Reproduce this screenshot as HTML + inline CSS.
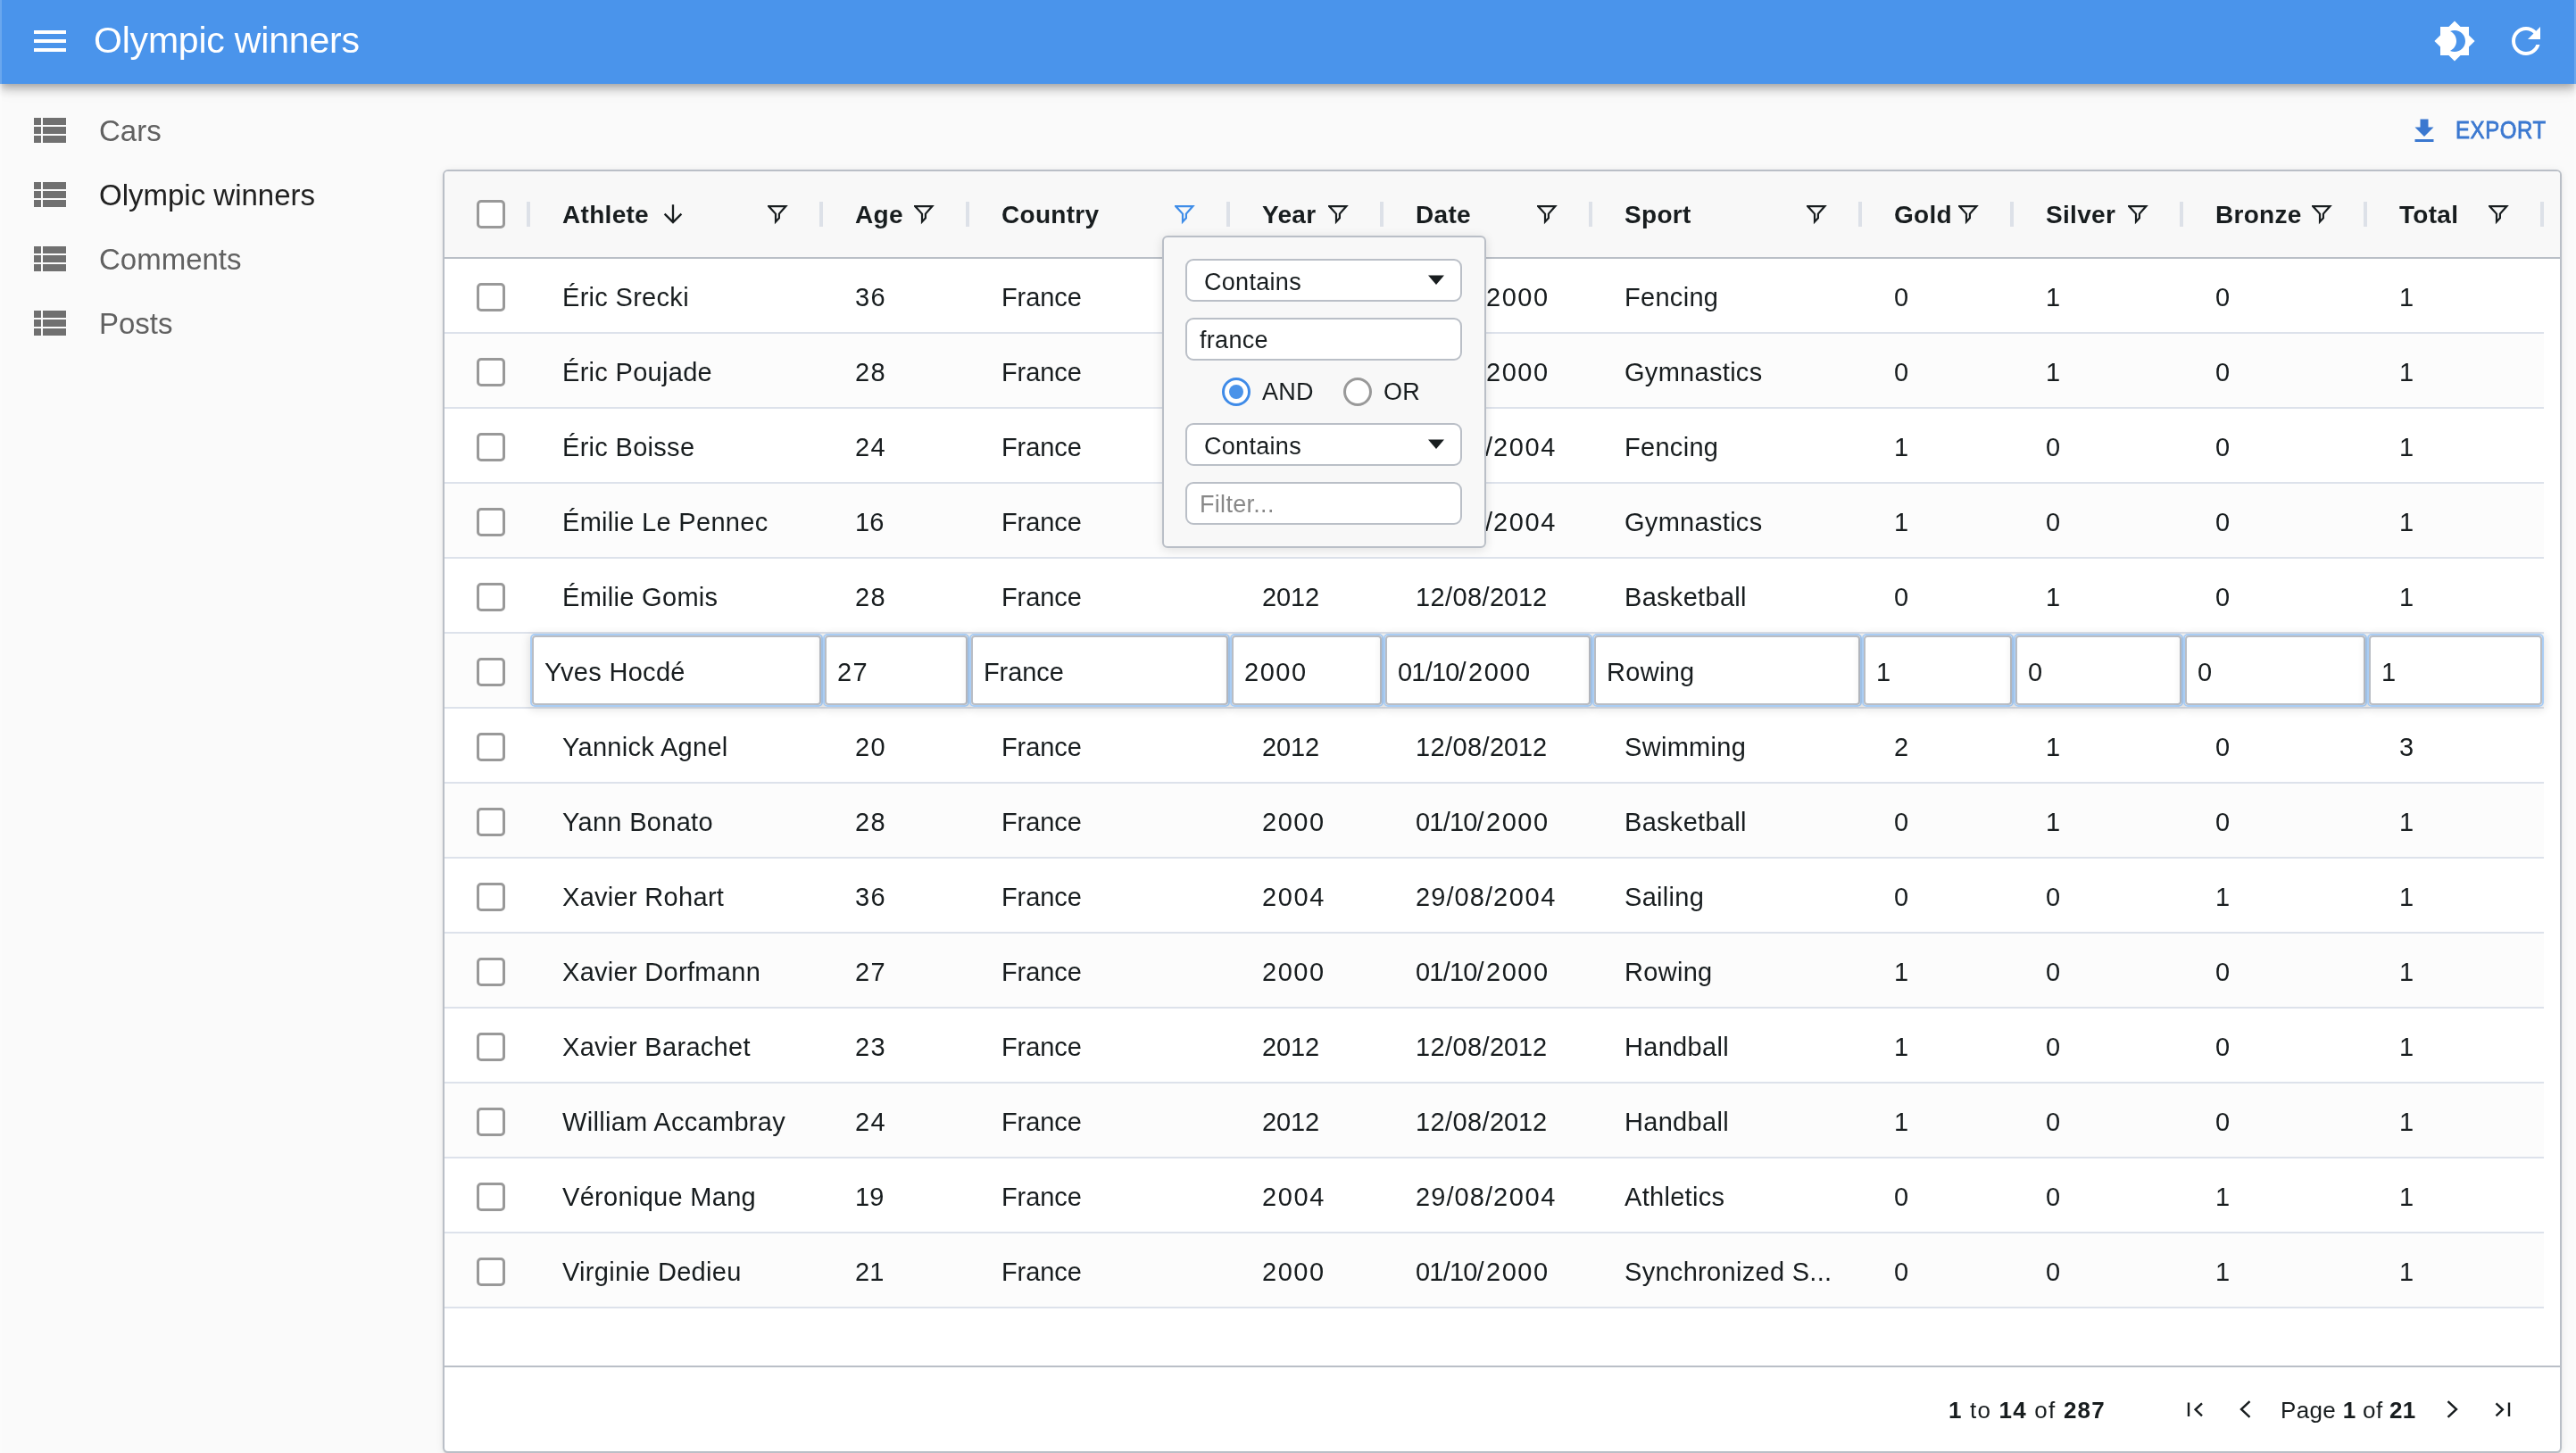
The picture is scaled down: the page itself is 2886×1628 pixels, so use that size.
<!DOCTYPE html>
<html><head><meta charset="utf-8"><style>
html,body{margin:0;padding:0;}
body{will-change:transform;width:2886px;height:1628px;overflow:hidden;background:#fafafa;position:relative;font-family:'Liberation Sans', sans-serif;}
.t{position:absolute;white-space:nowrap;}
.ic{position:absolute;display:block;}
#appbar{position:absolute;left:0;top:0;width:2886px;height:94px;background:#4a94eb;z-index:2;
  box-shadow:0 4px 8px -2px rgba(0,0,0,.2),0 8px 10px 0 rgba(0,0,0,.14),0 2px 20px 0 rgba(0,0,0,.12);}
.layer{position:absolute;left:0;top:0;width:0;height:0}
#edge{position:absolute;left:0;top:0;width:2px;height:1628px;background:rgba(255,255,255,0.18);z-index:10}
#edge2{position:absolute;left:2884px;top:0;width:2px;height:1628px;background:rgba(255,255,255,0.18);z-index:10}
#card{position:absolute;left:496px;top:190px;width:2370px;height:1434px;border:2px solid #babfc7;border-radius:6px;background:#fff;box-shadow:0 2px 2px -1px rgba(0,0,0,.12),0 1px 2px 0 rgba(0,0,0,.08),0 1px 8px 0 rgba(0,0,0,.08);}
#header{position:absolute;left:498px;top:192px;width:2370px;height:96px;background:#f8f8f8;border-bottom:2px solid #babfc7;border-radius:4px 4px 0 0}
.sep{position:absolute;top:226px;width:4px;height:28px;background:#dde1e8}
.cb{position:absolute;width:26px;height:26px;border:3px solid #999;border-radius:5px;background:#fff;z-index:1}
.row{position:absolute;left:498px;width:2352px;height:82px;border-bottom:2px solid #dde2eb}
.ed{position:absolute;height:82px;border:2px solid #aacdf4;border-radius:5px;box-sizing:border-box;
   box-shadow:0 2px 10px 2px rgba(0,0,0,0.10);z-index:1}
.edi{position:absolute;left:0;top:0;right:0;bottom:0;border:2px solid #b9bdc4;border-radius:4px;background:#fff}
#pager{position:absolute;left:498px;top:1530px;width:2370px;height:2px;background:#babfc7}
#popup{position:absolute;left:1302px;top:264px;width:359px;height:346px;background:#f8f8f8;border:2px solid #babfc7;border-radius:6px;
   box-shadow:0 2px 12px 0 rgba(0,0,0,0.12)}

.inp{position:absolute;left:1328px;width:310px;background:#fff;border:2px solid #babfc7;border-radius:9px;box-sizing:border-box}
.radio{position:absolute;width:26px;height:26px;border:3px solid #999;border-radius:50%;background:#fff}
.radio.on{border-color:#3f8be8;}
.radio.on::after{content:'';position:absolute;left:5px;top:5px;width:16px;height:16px;border-radius:50%;background:#4a93e9}
</style></head>
<body>
<div id="appbar"></div><div class="layer" style="z-index:3">
<div id="edge"></div><div id="edge2"></div>
<svg class="ic" style="left:32px;top:22px" width="48" height="48" viewBox="0 0 24 24"><path fill="#fff" d="M3 18h18v-2H3v2zm0-5h18v-2H3v2zm0-7v2h18V6H3z"/></svg>
<div class="t" style="left:105px;top:25px;font-size:41px;line-height:41px;color:#fff;font-weight:normal;letter-spacing:-0.2px">Olympic winners</div>
<svg class="ic" style="left:2726px;top:22px" width="48" height="48" viewBox="0 0 24 24"><path fill="#fff" d="M20 8.69V4h-4.69L12 .69 8.69 4H4v4.69L.69 12 4 15.31V20h4.69L12 23.31 15.31 20H20v-4.69L23.31 12 20 8.69zM12 18c-.89 0-1.74-.2-2.5-.55C11.56 16.5 13 14.42 13 12s-1.44-4.5-3.5-5.45C10.26 6.2 11.11 6 12 6c3.31 0 6 2.69 6 6s-2.69 6-6 6z"/></svg>
<svg class="ic" style="left:2806px;top:22px" width="48" height="48" viewBox="0 0 24 24"><path fill="#fff" d="M17.65 6.35C16.2 4.9 14.21 4 12 4c-4.42 0-7.99 3.58-7.99 8s3.57 8 7.99 8c3.73 0 6.84-2.55 7.73-6h-2.08c-.82 2.33-3.04 4-5.65 4-3.31 0-6-2.69-6-6s2.69-6 6-6c1.66 0 3.14.69 4.22 1.78L13 11h7V4l-2.35 2.35z"/></svg>
</div>
<svg class="ic" style="left:32px;top:122px" width="48" height="48" viewBox="0 0 24 24"><path fill="#707070" d="M3 14h4v-4H3v4zm0 5h4v-4H3v4zM3 9h4V5H3v4zm5 5h13v-4H8v4zm0 5h13v-4H8v4zM8 5v4h13V5H8z"/></svg>
<div class="t" style="left:111px;top:130px;font-size:33px;line-height:33px;color:#616161;font-weight:normal;">Cars</div>
<svg class="ic" style="left:32px;top:194px" width="48" height="48" viewBox="0 0 24 24"><path fill="#707070" d="M3 14h4v-4H3v4zm0 5h4v-4H3v4zM3 9h4V5H3v4zm5 5h13v-4H8v4zm0 5h13v-4H8v4zM8 5v4h13V5H8z"/></svg>
<div class="t" style="left:111px;top:202px;font-size:33px;line-height:33px;color:#212121;font-weight:normal;">Olympic winners</div>
<svg class="ic" style="left:32px;top:266px" width="48" height="48" viewBox="0 0 24 24"><path fill="#707070" d="M3 14h4v-4H3v4zm0 5h4v-4H3v4zM3 9h4V5H3v4zm5 5h13v-4H8v4zm0 5h13v-4H8v4zM8 5v4h13V5H8z"/></svg>
<div class="t" style="left:111px;top:274px;font-size:33px;line-height:33px;color:#616161;font-weight:normal;">Comments</div>
<svg class="ic" style="left:32px;top:338px" width="48" height="48" viewBox="0 0 24 24"><path fill="#707070" d="M3 14h4v-4H3v4zm0 5h4v-4H3v4zM3 9h4V5H3v4zm5 5h13v-4H8v4zm0 5h13v-4H8v4zM8 5v4h13V5H8z"/></svg>
<div class="t" style="left:111px;top:346px;font-size:33px;line-height:33px;color:#616161;font-weight:normal;">Posts</div>
<svg class="ic" style="left:2698px;top:129px" width="36" height="36" viewBox="0 0 24 24"><path fill="#3b78d0" d="M19 9h-4V3H9v6H5l7 7 7-7zM5 18v2h14v-2H5z"/></svg>
<div class="t" style="left:2751px;top:132px;font-size:27.5px;line-height:27.5px;color:#3b78d0;font-weight:normal;letter-spacing:0.6px;-webkit-text-stroke:0.8px #3b78d0;transform:scaleX(0.875);transform-origin:0 0;">EXPORT</div>
<div id="card"></div>
<div id="header"></div>
<div class="cb" style="left:534px;top:224px"></div>
<div class="sep" style="left:590px"></div>
<div class="sep" style="left:918px"></div>
<div class="sep" style="left:1082px"></div>
<div class="sep" style="left:1374px"></div>
<div class="sep" style="left:1546px"></div>
<div class="sep" style="left:1780px"></div>
<div class="sep" style="left:2082px"></div>
<div class="sep" style="left:2252px"></div>
<div class="sep" style="left:2442px"></div>
<div class="sep" style="left:2648px"></div>
<div class="sep" style="left:2846px"></div>
<div class="t" style="left:630px;top:227px;font-size:28px;line-height:28px;color:#181d1f;font-weight:bold;letter-spacing:0.3px">Athlete</div>
<svg class="ic" style="left:860px;top:229px" width="23" height="23" viewBox="0 0 23 23"><path fill="none" stroke="#181d1f" stroke-width="2.2" stroke-linejoin="miter" d="M1.2 2.1 H20.4 L12.9 10.6 V15.2 L9.0 19.4 V10.6 Z"/></svg>
<div class="t" style="left:958px;top:227px;font-size:28px;line-height:28px;color:#181d1f;font-weight:bold;letter-spacing:0.3px">Age</div>
<svg class="ic" style="left:1024px;top:229px" width="23" height="23" viewBox="0 0 23 23"><path fill="none" stroke="#181d1f" stroke-width="2.2" stroke-linejoin="miter" d="M1.2 2.1 H20.4 L12.9 10.6 V15.2 L9.0 19.4 V10.6 Z"/></svg>
<div class="t" style="left:1122px;top:227px;font-size:28px;line-height:28px;color:#181d1f;font-weight:bold;letter-spacing:0.3px">Country</div>
<svg class="ic" style="left:1316px;top:229px" width="23" height="23" viewBox="0 0 23 23"><path fill="none" stroke="#3f8de8" stroke-width="2.2" stroke-linejoin="miter" d="M1.2 2.1 H20.4 L12.9 10.6 V15.2 L9.0 19.4 V10.6 Z"/></svg>
<div class="t" style="left:1414px;top:227px;font-size:28px;line-height:28px;color:#181d1f;font-weight:bold;letter-spacing:0.3px">Year</div>
<svg class="ic" style="left:1488px;top:229px" width="23" height="23" viewBox="0 0 23 23"><path fill="none" stroke="#181d1f" stroke-width="2.2" stroke-linejoin="miter" d="M1.2 2.1 H20.4 L12.9 10.6 V15.2 L9.0 19.4 V10.6 Z"/></svg>
<div class="t" style="left:1586px;top:227px;font-size:28px;line-height:28px;color:#181d1f;font-weight:bold;letter-spacing:0.3px">Date</div>
<svg class="ic" style="left:1722px;top:229px" width="23" height="23" viewBox="0 0 23 23"><path fill="none" stroke="#181d1f" stroke-width="2.2" stroke-linejoin="miter" d="M1.2 2.1 H20.4 L12.9 10.6 V15.2 L9.0 19.4 V10.6 Z"/></svg>
<div class="t" style="left:1820px;top:227px;font-size:28px;line-height:28px;color:#181d1f;font-weight:bold;letter-spacing:0.3px">Sport</div>
<svg class="ic" style="left:2024px;top:229px" width="23" height="23" viewBox="0 0 23 23"><path fill="none" stroke="#181d1f" stroke-width="2.2" stroke-linejoin="miter" d="M1.2 2.1 H20.4 L12.9 10.6 V15.2 L9.0 19.4 V10.6 Z"/></svg>
<div class="t" style="left:2122px;top:227px;font-size:28px;line-height:28px;color:#181d1f;font-weight:bold;letter-spacing:0.3px">Gold</div>
<svg class="ic" style="left:2194px;top:229px" width="23" height="23" viewBox="0 0 23 23"><path fill="none" stroke="#181d1f" stroke-width="2.2" stroke-linejoin="miter" d="M1.2 2.1 H20.4 L12.9 10.6 V15.2 L9.0 19.4 V10.6 Z"/></svg>
<div class="t" style="left:2292px;top:227px;font-size:28px;line-height:28px;color:#181d1f;font-weight:bold;letter-spacing:0.3px">Silver</div>
<svg class="ic" style="left:2384px;top:229px" width="23" height="23" viewBox="0 0 23 23"><path fill="none" stroke="#181d1f" stroke-width="2.2" stroke-linejoin="miter" d="M1.2 2.1 H20.4 L12.9 10.6 V15.2 L9.0 19.4 V10.6 Z"/></svg>
<div class="t" style="left:2482px;top:227px;font-size:28px;line-height:28px;color:#181d1f;font-weight:bold;letter-spacing:0.3px">Bronze</div>
<svg class="ic" style="left:2590px;top:229px" width="23" height="23" viewBox="0 0 23 23"><path fill="none" stroke="#181d1f" stroke-width="2.2" stroke-linejoin="miter" d="M1.2 2.1 H20.4 L12.9 10.6 V15.2 L9.0 19.4 V10.6 Z"/></svg>
<div class="t" style="left:2688px;top:227px;font-size:28px;line-height:28px;color:#181d1f;font-weight:bold;letter-spacing:0.3px">Total</div>
<svg class="ic" style="left:2788px;top:229px" width="23" height="23" viewBox="0 0 23 23"><path fill="none" stroke="#181d1f" stroke-width="2.2" stroke-linejoin="miter" d="M1.2 2.1 H20.4 L12.9 10.6 V15.2 L9.0 19.4 V10.6 Z"/></svg>
<svg class="ic" style="left:742px;top:228px" width="24" height="24" viewBox="0 0 24 24"><path fill="none" stroke="#181d1f" stroke-width="2.3" d="M12 1.2V21M2.6 11.6L12 21l9.4-9.4"/></svg>
<div class="row" style="top:290px;background:#fff"></div>
<div class="cb" style="left:534px;top:317px"></div>
<div class="t" style="left:630px;top:319px;font-size:29px;line-height:29px;color:#181d1f;font-weight:normal;letter-spacing:0.3px;">Éric Srecki</div>
<div class="t" style="left:958px;top:319px;font-size:29px;line-height:29px;color:#181d1f;font-weight:normal;letter-spacing:1.4px;">36</div>
<div class="t" style="left:1122px;top:319px;font-size:29px;line-height:29px;color:#181d1f;font-weight:normal;letter-spacing:-0.1px;">France</div>
<div class="t" style="left:1414px;top:319px;font-size:29px;line-height:29px;color:#181d1f;font-weight:normal;letter-spacing:1.5px;">2000</div>
<div class="t" style="left:1586px;top:319px;font-size:29px;line-height:29px;color:#181d1f;font-weight:normal;letter-spacing:-0.8px;">01/10/</div><div class="t" style="left:1665px;top:319px;font-size:29px;line-height:29px;color:#181d1f;font-weight:normal;letter-spacing:1.5px;">2000</div>
<div class="t" style="left:1820px;top:319px;font-size:29px;line-height:29px;color:#181d1f;font-weight:normal;letter-spacing:0.3px;">Fencing</div>
<div class="t" style="left:2122px;top:319px;font-size:29px;line-height:29px;color:#181d1f;font-weight:normal;letter-spacing:0.3px;">0</div>
<div class="t" style="left:2292px;top:319px;font-size:29px;line-height:29px;color:#181d1f;font-weight:normal;letter-spacing:0.3px;">1</div>
<div class="t" style="left:2482px;top:319px;font-size:29px;line-height:29px;color:#181d1f;font-weight:normal;letter-spacing:0.3px;">0</div>
<div class="t" style="left:2688px;top:319px;font-size:29px;line-height:29px;color:#181d1f;font-weight:normal;letter-spacing:0.3px;">1</div>
<div class="row" style="top:374px;background:#fcfcfc"></div>
<div class="cb" style="left:534px;top:401px"></div>
<div class="t" style="left:630px;top:403px;font-size:29px;line-height:29px;color:#181d1f;font-weight:normal;letter-spacing:0.3px;">Éric Poujade</div>
<div class="t" style="left:958px;top:403px;font-size:29px;line-height:29px;color:#181d1f;font-weight:normal;letter-spacing:1.4px;">28</div>
<div class="t" style="left:1122px;top:403px;font-size:29px;line-height:29px;color:#181d1f;font-weight:normal;letter-spacing:-0.1px;">France</div>
<div class="t" style="left:1414px;top:403px;font-size:29px;line-height:29px;color:#181d1f;font-weight:normal;letter-spacing:1.5px;">2000</div>
<div class="t" style="left:1586px;top:403px;font-size:29px;line-height:29px;color:#181d1f;font-weight:normal;letter-spacing:-0.8px;">01/10/</div><div class="t" style="left:1665px;top:403px;font-size:29px;line-height:29px;color:#181d1f;font-weight:normal;letter-spacing:1.5px;">2000</div>
<div class="t" style="left:1820px;top:403px;font-size:29px;line-height:29px;color:#181d1f;font-weight:normal;letter-spacing:0.3px;">Gymnastics</div>
<div class="t" style="left:2122px;top:403px;font-size:29px;line-height:29px;color:#181d1f;font-weight:normal;letter-spacing:0.3px;">0</div>
<div class="t" style="left:2292px;top:403px;font-size:29px;line-height:29px;color:#181d1f;font-weight:normal;letter-spacing:0.3px;">1</div>
<div class="t" style="left:2482px;top:403px;font-size:29px;line-height:29px;color:#181d1f;font-weight:normal;letter-spacing:0.3px;">0</div>
<div class="t" style="left:2688px;top:403px;font-size:29px;line-height:29px;color:#181d1f;font-weight:normal;letter-spacing:0.3px;">1</div>
<div class="row" style="top:458px;background:#fff"></div>
<div class="cb" style="left:534px;top:485px"></div>
<div class="t" style="left:630px;top:487px;font-size:29px;line-height:29px;color:#181d1f;font-weight:normal;letter-spacing:0.3px;">Éric Boisse</div>
<div class="t" style="left:958px;top:487px;font-size:29px;line-height:29px;color:#181d1f;font-weight:normal;letter-spacing:1.4px;">24</div>
<div class="t" style="left:1122px;top:487px;font-size:29px;line-height:29px;color:#181d1f;font-weight:normal;letter-spacing:-0.1px;">France</div>
<div class="t" style="left:1414px;top:487px;font-size:29px;line-height:29px;color:#181d1f;font-weight:normal;letter-spacing:1.65px;">2004</div>
<div class="t" style="left:1586px;top:487px;font-size:29px;line-height:29px;color:#181d1f;font-weight:normal;letter-spacing:1.07px;">29/08/</div><div class="t" style="left:1673px;top:487px;font-size:29px;line-height:29px;color:#181d1f;font-weight:normal;letter-spacing:1.65px;">2004</div>
<div class="t" style="left:1820px;top:487px;font-size:29px;line-height:29px;color:#181d1f;font-weight:normal;letter-spacing:0.3px;">Fencing</div>
<div class="t" style="left:2122px;top:487px;font-size:29px;line-height:29px;color:#181d1f;font-weight:normal;letter-spacing:0.3px;">1</div>
<div class="t" style="left:2292px;top:487px;font-size:29px;line-height:29px;color:#181d1f;font-weight:normal;letter-spacing:0.3px;">0</div>
<div class="t" style="left:2482px;top:487px;font-size:29px;line-height:29px;color:#181d1f;font-weight:normal;letter-spacing:0.3px;">0</div>
<div class="t" style="left:2688px;top:487px;font-size:29px;line-height:29px;color:#181d1f;font-weight:normal;letter-spacing:0.3px;">1</div>
<div class="row" style="top:542px;background:#fcfcfc"></div>
<div class="cb" style="left:534px;top:569px"></div>
<div class="t" style="left:630px;top:571px;font-size:29px;line-height:29px;color:#181d1f;font-weight:normal;letter-spacing:0.3px;">Émilie Le Pennec</div>
<div class="t" style="left:958px;top:571px;font-size:29px;line-height:29px;color:#181d1f;font-weight:normal;letter-spacing:0.0px;">16</div>
<div class="t" style="left:1122px;top:571px;font-size:29px;line-height:29px;color:#181d1f;font-weight:normal;letter-spacing:-0.1px;">France</div>
<div class="t" style="left:1414px;top:571px;font-size:29px;line-height:29px;color:#181d1f;font-weight:normal;letter-spacing:1.65px;">2004</div>
<div class="t" style="left:1586px;top:571px;font-size:29px;line-height:29px;color:#181d1f;font-weight:normal;letter-spacing:1.07px;">29/08/</div><div class="t" style="left:1673px;top:571px;font-size:29px;line-height:29px;color:#181d1f;font-weight:normal;letter-spacing:1.65px;">2004</div>
<div class="t" style="left:1820px;top:571px;font-size:29px;line-height:29px;color:#181d1f;font-weight:normal;letter-spacing:0.3px;">Gymnastics</div>
<div class="t" style="left:2122px;top:571px;font-size:29px;line-height:29px;color:#181d1f;font-weight:normal;letter-spacing:0.3px;">1</div>
<div class="t" style="left:2292px;top:571px;font-size:29px;line-height:29px;color:#181d1f;font-weight:normal;letter-spacing:0.3px;">0</div>
<div class="t" style="left:2482px;top:571px;font-size:29px;line-height:29px;color:#181d1f;font-weight:normal;letter-spacing:0.3px;">0</div>
<div class="t" style="left:2688px;top:571px;font-size:29px;line-height:29px;color:#181d1f;font-weight:normal;letter-spacing:0.3px;">1</div>
<div class="row" style="top:626px;background:#fff"></div>
<div class="cb" style="left:534px;top:653px"></div>
<div class="t" style="left:630px;top:655px;font-size:29px;line-height:29px;color:#181d1f;font-weight:normal;letter-spacing:0.3px;">Émilie Gomis</div>
<div class="t" style="left:958px;top:655px;font-size:29px;line-height:29px;color:#181d1f;font-weight:normal;letter-spacing:1.4px;">28</div>
<div class="t" style="left:1122px;top:655px;font-size:29px;line-height:29px;color:#181d1f;font-weight:normal;letter-spacing:-0.1px;">France</div>
<div class="t" style="left:1414px;top:655px;font-size:29px;line-height:29px;color:#181d1f;font-weight:normal;letter-spacing:-0.15px;">2012</div>
<div class="t" style="left:1586px;top:655px;font-size:29px;line-height:29px;color:#181d1f;font-weight:normal;letter-spacing:0.4px;">12/08/</div><div class="t" style="left:1669px;top:655px;font-size:29px;line-height:29px;color:#181d1f;font-weight:normal;letter-spacing:-0.15px;">2012</div>
<div class="t" style="left:1820px;top:655px;font-size:29px;line-height:29px;color:#181d1f;font-weight:normal;letter-spacing:0.3px;">Basketball</div>
<div class="t" style="left:2122px;top:655px;font-size:29px;line-height:29px;color:#181d1f;font-weight:normal;letter-spacing:0.3px;">0</div>
<div class="t" style="left:2292px;top:655px;font-size:29px;line-height:29px;color:#181d1f;font-weight:normal;letter-spacing:0.3px;">1</div>
<div class="t" style="left:2482px;top:655px;font-size:29px;line-height:29px;color:#181d1f;font-weight:normal;letter-spacing:0.3px;">0</div>
<div class="t" style="left:2688px;top:655px;font-size:29px;line-height:29px;color:#181d1f;font-weight:normal;letter-spacing:0.3px;">1</div>
<div class="row" style="top:710px;background:#fcfcfc"></div>
<div class="cb" style="left:534px;top:737px"></div>
<div class="ed" style="left:594px;top:710px;width:328px"><div class="edi"></div></div>
<div class="t" style="left:610px;top:739px;font-size:29px;line-height:29px;color:#181d1f;font-weight:normal;letter-spacing:0.3px;z-index:2">Yves Hocdé</div>
<div class="ed" style="left:922px;top:710px;width:164px"><div class="edi"></div></div>
<div class="t" style="left:938px;top:739px;font-size:29px;line-height:29px;color:#181d1f;font-weight:normal;letter-spacing:1.4px;z-index:2">27</div>
<div class="ed" style="left:1086px;top:710px;width:292px"><div class="edi"></div></div>
<div class="t" style="left:1102px;top:739px;font-size:29px;line-height:29px;color:#181d1f;font-weight:normal;letter-spacing:-0.1px;z-index:2">France</div>
<div class="ed" style="left:1378px;top:710px;width:172px"><div class="edi"></div></div>
<div class="t" style="left:1394px;top:739px;font-size:29px;line-height:29px;color:#181d1f;font-weight:normal;letter-spacing:1.5px;z-index:2">2000</div>
<div class="ed" style="left:1550px;top:710px;width:234px"><div class="edi"></div></div>
<div class="t" style="left:1566px;top:739px;font-size:29px;line-height:29px;color:#181d1f;font-weight:normal;letter-spacing:-0.8px;z-index:2">01/10/</div><div class="t" style="left:1645px;top:739px;font-size:29px;line-height:29px;color:#181d1f;font-weight:normal;letter-spacing:1.5px;z-index:2">2000</div>
<div class="ed" style="left:1784px;top:710px;width:302px"><div class="edi"></div></div>
<div class="t" style="left:1800px;top:739px;font-size:29px;line-height:29px;color:#181d1f;font-weight:normal;letter-spacing:0.3px;z-index:2">Rowing</div>
<div class="ed" style="left:2086px;top:710px;width:170px"><div class="edi"></div></div>
<div class="t" style="left:2102px;top:739px;font-size:29px;line-height:29px;color:#181d1f;font-weight:normal;letter-spacing:0.3px;z-index:2">1</div>
<div class="ed" style="left:2256px;top:710px;width:190px"><div class="edi"></div></div>
<div class="t" style="left:2272px;top:739px;font-size:29px;line-height:29px;color:#181d1f;font-weight:normal;letter-spacing:0.3px;z-index:2">0</div>
<div class="ed" style="left:2446px;top:710px;width:206px"><div class="edi"></div></div>
<div class="t" style="left:2462px;top:739px;font-size:29px;line-height:29px;color:#181d1f;font-weight:normal;letter-spacing:0.3px;z-index:2">0</div>
<div class="ed" style="left:2652px;top:710px;width:198px"><div class="edi"></div></div>
<div class="t" style="left:2668px;top:739px;font-size:29px;line-height:29px;color:#181d1f;font-weight:normal;letter-spacing:0.3px;z-index:2">1</div>
<div class="row" style="top:794px;background:#fff"></div>
<div class="cb" style="left:534px;top:821px"></div>
<div class="t" style="left:630px;top:823px;font-size:29px;line-height:29px;color:#181d1f;font-weight:normal;letter-spacing:0.3px;">Yannick Agnel</div>
<div class="t" style="left:958px;top:823px;font-size:29px;line-height:29px;color:#181d1f;font-weight:normal;letter-spacing:1.4px;">20</div>
<div class="t" style="left:1122px;top:823px;font-size:29px;line-height:29px;color:#181d1f;font-weight:normal;letter-spacing:-0.1px;">France</div>
<div class="t" style="left:1414px;top:823px;font-size:29px;line-height:29px;color:#181d1f;font-weight:normal;letter-spacing:-0.15px;">2012</div>
<div class="t" style="left:1586px;top:823px;font-size:29px;line-height:29px;color:#181d1f;font-weight:normal;letter-spacing:0.4px;">12/08/</div><div class="t" style="left:1669px;top:823px;font-size:29px;line-height:29px;color:#181d1f;font-weight:normal;letter-spacing:-0.15px;">2012</div>
<div class="t" style="left:1820px;top:823px;font-size:29px;line-height:29px;color:#181d1f;font-weight:normal;letter-spacing:0.3px;">Swimming</div>
<div class="t" style="left:2122px;top:823px;font-size:29px;line-height:29px;color:#181d1f;font-weight:normal;letter-spacing:0.3px;">2</div>
<div class="t" style="left:2292px;top:823px;font-size:29px;line-height:29px;color:#181d1f;font-weight:normal;letter-spacing:0.3px;">1</div>
<div class="t" style="left:2482px;top:823px;font-size:29px;line-height:29px;color:#181d1f;font-weight:normal;letter-spacing:0.3px;">0</div>
<div class="t" style="left:2688px;top:823px;font-size:29px;line-height:29px;color:#181d1f;font-weight:normal;letter-spacing:0.3px;">3</div>
<div class="row" style="top:878px;background:#fcfcfc"></div>
<div class="cb" style="left:534px;top:905px"></div>
<div class="t" style="left:630px;top:907px;font-size:29px;line-height:29px;color:#181d1f;font-weight:normal;letter-spacing:0.3px;">Yann Bonato</div>
<div class="t" style="left:958px;top:907px;font-size:29px;line-height:29px;color:#181d1f;font-weight:normal;letter-spacing:1.4px;">28</div>
<div class="t" style="left:1122px;top:907px;font-size:29px;line-height:29px;color:#181d1f;font-weight:normal;letter-spacing:-0.1px;">France</div>
<div class="t" style="left:1414px;top:907px;font-size:29px;line-height:29px;color:#181d1f;font-weight:normal;letter-spacing:1.5px;">2000</div>
<div class="t" style="left:1586px;top:907px;font-size:29px;line-height:29px;color:#181d1f;font-weight:normal;letter-spacing:-0.8px;">01/10/</div><div class="t" style="left:1665px;top:907px;font-size:29px;line-height:29px;color:#181d1f;font-weight:normal;letter-spacing:1.5px;">2000</div>
<div class="t" style="left:1820px;top:907px;font-size:29px;line-height:29px;color:#181d1f;font-weight:normal;letter-spacing:0.3px;">Basketball</div>
<div class="t" style="left:2122px;top:907px;font-size:29px;line-height:29px;color:#181d1f;font-weight:normal;letter-spacing:0.3px;">0</div>
<div class="t" style="left:2292px;top:907px;font-size:29px;line-height:29px;color:#181d1f;font-weight:normal;letter-spacing:0.3px;">1</div>
<div class="t" style="left:2482px;top:907px;font-size:29px;line-height:29px;color:#181d1f;font-weight:normal;letter-spacing:0.3px;">0</div>
<div class="t" style="left:2688px;top:907px;font-size:29px;line-height:29px;color:#181d1f;font-weight:normal;letter-spacing:0.3px;">1</div>
<div class="row" style="top:962px;background:#fff"></div>
<div class="cb" style="left:534px;top:989px"></div>
<div class="t" style="left:630px;top:991px;font-size:29px;line-height:29px;color:#181d1f;font-weight:normal;letter-spacing:0.3px;">Xavier Rohart</div>
<div class="t" style="left:958px;top:991px;font-size:29px;line-height:29px;color:#181d1f;font-weight:normal;letter-spacing:1.4px;">36</div>
<div class="t" style="left:1122px;top:991px;font-size:29px;line-height:29px;color:#181d1f;font-weight:normal;letter-spacing:-0.1px;">France</div>
<div class="t" style="left:1414px;top:991px;font-size:29px;line-height:29px;color:#181d1f;font-weight:normal;letter-spacing:1.65px;">2004</div>
<div class="t" style="left:1586px;top:991px;font-size:29px;line-height:29px;color:#181d1f;font-weight:normal;letter-spacing:1.07px;">29/08/</div><div class="t" style="left:1673px;top:991px;font-size:29px;line-height:29px;color:#181d1f;font-weight:normal;letter-spacing:1.65px;">2004</div>
<div class="t" style="left:1820px;top:991px;font-size:29px;line-height:29px;color:#181d1f;font-weight:normal;letter-spacing:0.3px;">Sailing</div>
<div class="t" style="left:2122px;top:991px;font-size:29px;line-height:29px;color:#181d1f;font-weight:normal;letter-spacing:0.3px;">0</div>
<div class="t" style="left:2292px;top:991px;font-size:29px;line-height:29px;color:#181d1f;font-weight:normal;letter-spacing:0.3px;">0</div>
<div class="t" style="left:2482px;top:991px;font-size:29px;line-height:29px;color:#181d1f;font-weight:normal;letter-spacing:0.3px;">1</div>
<div class="t" style="left:2688px;top:991px;font-size:29px;line-height:29px;color:#181d1f;font-weight:normal;letter-spacing:0.3px;">1</div>
<div class="row" style="top:1046px;background:#fcfcfc"></div>
<div class="cb" style="left:534px;top:1073px"></div>
<div class="t" style="left:630px;top:1075px;font-size:29px;line-height:29px;color:#181d1f;font-weight:normal;letter-spacing:0.3px;">Xavier Dorfmann</div>
<div class="t" style="left:958px;top:1075px;font-size:29px;line-height:29px;color:#181d1f;font-weight:normal;letter-spacing:1.4px;">27</div>
<div class="t" style="left:1122px;top:1075px;font-size:29px;line-height:29px;color:#181d1f;font-weight:normal;letter-spacing:-0.1px;">France</div>
<div class="t" style="left:1414px;top:1075px;font-size:29px;line-height:29px;color:#181d1f;font-weight:normal;letter-spacing:1.5px;">2000</div>
<div class="t" style="left:1586px;top:1075px;font-size:29px;line-height:29px;color:#181d1f;font-weight:normal;letter-spacing:-0.8px;">01/10/</div><div class="t" style="left:1665px;top:1075px;font-size:29px;line-height:29px;color:#181d1f;font-weight:normal;letter-spacing:1.5px;">2000</div>
<div class="t" style="left:1820px;top:1075px;font-size:29px;line-height:29px;color:#181d1f;font-weight:normal;letter-spacing:0.3px;">Rowing</div>
<div class="t" style="left:2122px;top:1075px;font-size:29px;line-height:29px;color:#181d1f;font-weight:normal;letter-spacing:0.3px;">1</div>
<div class="t" style="left:2292px;top:1075px;font-size:29px;line-height:29px;color:#181d1f;font-weight:normal;letter-spacing:0.3px;">0</div>
<div class="t" style="left:2482px;top:1075px;font-size:29px;line-height:29px;color:#181d1f;font-weight:normal;letter-spacing:0.3px;">0</div>
<div class="t" style="left:2688px;top:1075px;font-size:29px;line-height:29px;color:#181d1f;font-weight:normal;letter-spacing:0.3px;">1</div>
<div class="row" style="top:1130px;background:#fff"></div>
<div class="cb" style="left:534px;top:1157px"></div>
<div class="t" style="left:630px;top:1159px;font-size:29px;line-height:29px;color:#181d1f;font-weight:normal;letter-spacing:0.3px;">Xavier Barachet</div>
<div class="t" style="left:958px;top:1159px;font-size:29px;line-height:29px;color:#181d1f;font-weight:normal;letter-spacing:1.4px;">23</div>
<div class="t" style="left:1122px;top:1159px;font-size:29px;line-height:29px;color:#181d1f;font-weight:normal;letter-spacing:-0.1px;">France</div>
<div class="t" style="left:1414px;top:1159px;font-size:29px;line-height:29px;color:#181d1f;font-weight:normal;letter-spacing:-0.15px;">2012</div>
<div class="t" style="left:1586px;top:1159px;font-size:29px;line-height:29px;color:#181d1f;font-weight:normal;letter-spacing:0.4px;">12/08/</div><div class="t" style="left:1669px;top:1159px;font-size:29px;line-height:29px;color:#181d1f;font-weight:normal;letter-spacing:-0.15px;">2012</div>
<div class="t" style="left:1820px;top:1159px;font-size:29px;line-height:29px;color:#181d1f;font-weight:normal;letter-spacing:0.3px;">Handball</div>
<div class="t" style="left:2122px;top:1159px;font-size:29px;line-height:29px;color:#181d1f;font-weight:normal;letter-spacing:0.3px;">1</div>
<div class="t" style="left:2292px;top:1159px;font-size:29px;line-height:29px;color:#181d1f;font-weight:normal;letter-spacing:0.3px;">0</div>
<div class="t" style="left:2482px;top:1159px;font-size:29px;line-height:29px;color:#181d1f;font-weight:normal;letter-spacing:0.3px;">0</div>
<div class="t" style="left:2688px;top:1159px;font-size:29px;line-height:29px;color:#181d1f;font-weight:normal;letter-spacing:0.3px;">1</div>
<div class="row" style="top:1214px;background:#fcfcfc"></div>
<div class="cb" style="left:534px;top:1241px"></div>
<div class="t" style="left:630px;top:1243px;font-size:29px;line-height:29px;color:#181d1f;font-weight:normal;letter-spacing:0.3px;">William Accambray</div>
<div class="t" style="left:958px;top:1243px;font-size:29px;line-height:29px;color:#181d1f;font-weight:normal;letter-spacing:1.4px;">24</div>
<div class="t" style="left:1122px;top:1243px;font-size:29px;line-height:29px;color:#181d1f;font-weight:normal;letter-spacing:-0.1px;">France</div>
<div class="t" style="left:1414px;top:1243px;font-size:29px;line-height:29px;color:#181d1f;font-weight:normal;letter-spacing:-0.15px;">2012</div>
<div class="t" style="left:1586px;top:1243px;font-size:29px;line-height:29px;color:#181d1f;font-weight:normal;letter-spacing:0.4px;">12/08/</div><div class="t" style="left:1669px;top:1243px;font-size:29px;line-height:29px;color:#181d1f;font-weight:normal;letter-spacing:-0.15px;">2012</div>
<div class="t" style="left:1820px;top:1243px;font-size:29px;line-height:29px;color:#181d1f;font-weight:normal;letter-spacing:0.3px;">Handball</div>
<div class="t" style="left:2122px;top:1243px;font-size:29px;line-height:29px;color:#181d1f;font-weight:normal;letter-spacing:0.3px;">1</div>
<div class="t" style="left:2292px;top:1243px;font-size:29px;line-height:29px;color:#181d1f;font-weight:normal;letter-spacing:0.3px;">0</div>
<div class="t" style="left:2482px;top:1243px;font-size:29px;line-height:29px;color:#181d1f;font-weight:normal;letter-spacing:0.3px;">0</div>
<div class="t" style="left:2688px;top:1243px;font-size:29px;line-height:29px;color:#181d1f;font-weight:normal;letter-spacing:0.3px;">1</div>
<div class="row" style="top:1298px;background:#fff"></div>
<div class="cb" style="left:534px;top:1325px"></div>
<div class="t" style="left:630px;top:1327px;font-size:29px;line-height:29px;color:#181d1f;font-weight:normal;letter-spacing:0.3px;">Véronique Mang</div>
<div class="t" style="left:958px;top:1327px;font-size:29px;line-height:29px;color:#181d1f;font-weight:normal;letter-spacing:0.0px;">19</div>
<div class="t" style="left:1122px;top:1327px;font-size:29px;line-height:29px;color:#181d1f;font-weight:normal;letter-spacing:-0.1px;">France</div>
<div class="t" style="left:1414px;top:1327px;font-size:29px;line-height:29px;color:#181d1f;font-weight:normal;letter-spacing:1.65px;">2004</div>
<div class="t" style="left:1586px;top:1327px;font-size:29px;line-height:29px;color:#181d1f;font-weight:normal;letter-spacing:1.07px;">29/08/</div><div class="t" style="left:1673px;top:1327px;font-size:29px;line-height:29px;color:#181d1f;font-weight:normal;letter-spacing:1.65px;">2004</div>
<div class="t" style="left:1820px;top:1327px;font-size:29px;line-height:29px;color:#181d1f;font-weight:normal;letter-spacing:0.3px;">Athletics</div>
<div class="t" style="left:2122px;top:1327px;font-size:29px;line-height:29px;color:#181d1f;font-weight:normal;letter-spacing:0.3px;">0</div>
<div class="t" style="left:2292px;top:1327px;font-size:29px;line-height:29px;color:#181d1f;font-weight:normal;letter-spacing:0.3px;">0</div>
<div class="t" style="left:2482px;top:1327px;font-size:29px;line-height:29px;color:#181d1f;font-weight:normal;letter-spacing:0.3px;">1</div>
<div class="t" style="left:2688px;top:1327px;font-size:29px;line-height:29px;color:#181d1f;font-weight:normal;letter-spacing:0.3px;">1</div>
<div class="row" style="top:1382px;background:#fcfcfc"></div>
<div class="cb" style="left:534px;top:1409px"></div>
<div class="t" style="left:630px;top:1411px;font-size:29px;line-height:29px;color:#181d1f;font-weight:normal;letter-spacing:0.3px;">Virginie Dedieu</div>
<div class="t" style="left:958px;top:1411px;font-size:29px;line-height:29px;color:#181d1f;font-weight:normal;letter-spacing:0.0px;">21</div>
<div class="t" style="left:1122px;top:1411px;font-size:29px;line-height:29px;color:#181d1f;font-weight:normal;letter-spacing:-0.1px;">France</div>
<div class="t" style="left:1414px;top:1411px;font-size:29px;line-height:29px;color:#181d1f;font-weight:normal;letter-spacing:1.5px;">2000</div>
<div class="t" style="left:1586px;top:1411px;font-size:29px;line-height:29px;color:#181d1f;font-weight:normal;letter-spacing:-0.8px;">01/10/</div><div class="t" style="left:1665px;top:1411px;font-size:29px;line-height:29px;color:#181d1f;font-weight:normal;letter-spacing:1.5px;">2000</div>
<div class="t" style="left:1820px;top:1411px;font-size:29px;line-height:29px;color:#181d1f;font-weight:normal;letter-spacing:0.3px;">Synchronized S...</div>
<div class="t" style="left:2122px;top:1411px;font-size:29px;line-height:29px;color:#181d1f;font-weight:normal;letter-spacing:0.3px;">0</div>
<div class="t" style="left:2292px;top:1411px;font-size:29px;line-height:29px;color:#181d1f;font-weight:normal;letter-spacing:0.3px;">0</div>
<div class="t" style="left:2482px;top:1411px;font-size:29px;line-height:29px;color:#181d1f;font-weight:normal;letter-spacing:0.3px;">1</div>
<div class="t" style="left:2688px;top:1411px;font-size:29px;line-height:29px;color:#181d1f;font-weight:normal;letter-spacing:0.3px;">1</div>
<div id="pager"></div>
<div class="t" style="left:2183px;top:1567px;font-size:26px;line-height:26px;letter-spacing:1.2px;color:#181d1f"><b>1</b> to <b>14</b> of <b>287</b></div>
<div class="t" style="left:2555px;top:1567px;font-size:26px;line-height:26px;letter-spacing:0.35px;color:#181d1f">Page <b>1</b> of <b>21</b></div>
<svg class="ic" style="left:2440px;top:1560px" width="40" height="40" viewBox="0 0 40 40"><path fill="none" stroke="#181d1f" stroke-width="2.4" stroke-linecap="butt" d="M12 11.4V27M27 12.3L19.6 19.3 27 26.3"/></svg>
<svg class="ic" style="left:2495px;top:1560px" width="40" height="40" viewBox="0 0 40 40"><path fill="none" stroke="#181d1f" stroke-width="2.4" stroke-linecap="butt" d="M25.5 10.2L16 19 25.5 27.8"/></svg>
<svg class="ic" style="left:2728px;top:1560px" width="40" height="40" viewBox="0 0 40 40"><path fill="none" stroke="#181d1f" stroke-width="2.4" stroke-linecap="butt" d="M14.5 10.2L24 19 14.5 27.8"/></svg>
<svg class="ic" style="left:2784px;top:1560px" width="40" height="40" viewBox="0 0 40 40"><path fill="none" stroke="#181d1f" stroke-width="2.4" stroke-linecap="butt" d="M27 11.4V27M12.5 12.3L19.9 19.3 12.5 26.3"/></svg>
<div class="layer" style="z-index:6"><div id="popup"></div>
<div class="inp" style="top:290px;height:48px"></div><div class="t" style="left:1349px;top:303px;font-size:27px;line-height:27px;color:#181d1f;font-weight:normal;letter-spacing:0.3px">Contains</div><svg class="ic" style="left:1599px;top:307px" width="20" height="13" viewBox="0 0 20 13"><path fill="#181d1f" d="M1 1.5H19L10 12Z"/></svg>
<div class="inp" style="top:356px;height:48px"></div>
<div class="t" style="left:1344px;top:368px;font-size:27px;line-height:27px;color:#181d1f;font-weight:normal;letter-spacing:0.3px">france</div>
<div class="radio on" style="left:1369px;top:423px"></div>
<div class="t" style="left:1414px;top:426px;font-size:27px;line-height:27px;color:#181d1f;font-weight:normal;letter-spacing:0.3px">AND</div>
<div class="radio" style="left:1505px;top:423px"></div>
<div class="t" style="left:1550px;top:426px;font-size:27px;line-height:27px;color:#181d1f;font-weight:normal;letter-spacing:0.3px">OR</div>
<div class="inp" style="top:474px;height:48px"></div><div class="t" style="left:1349px;top:487px;font-size:27px;line-height:27px;color:#181d1f;font-weight:normal;letter-spacing:0.3px">Contains</div><svg class="ic" style="left:1599px;top:491px" width="20" height="13" viewBox="0 0 20 13"><path fill="#181d1f" d="M1 1.5H19L10 12Z"/></svg>
<div class="inp" style="top:540px;height:48px"></div>
<div class="t" style="left:1344px;top:552px;font-size:27px;line-height:27px;color:#888;font-weight:normal;letter-spacing:0.3px">Filter...</div>
</div>
</body></html>
